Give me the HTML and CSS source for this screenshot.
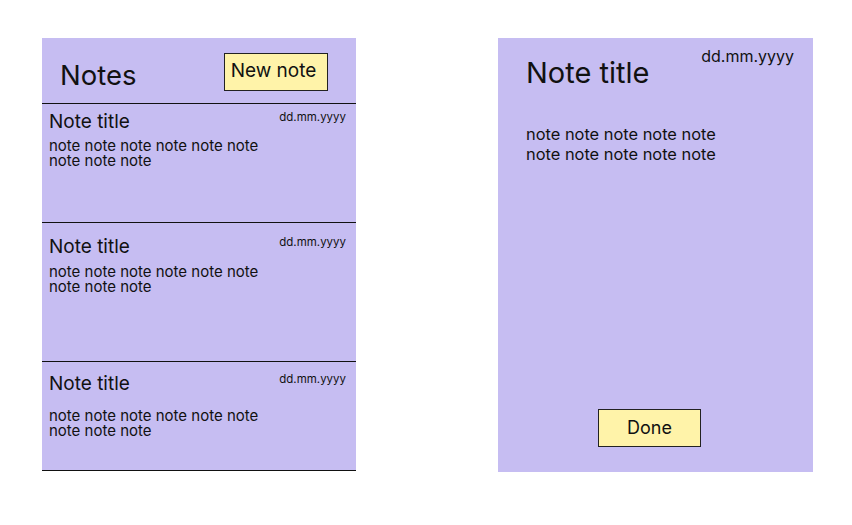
FILE: index.html
```html
<!DOCTYPE html>
<html>
<head>
<meta charset="utf-8">
<link rel="stylesheet" href="styles.css">
</head>
<body>
<div class="screen">
  <section class="list">
    <header class="list-header">
      <h1 class="list-title">Notes</h1>
      <button class="btn btn-new">New note</button>
    </header>
    <article class="note note-1">
      <div class="note-head">
        <h2 class="note-title">Note title</h2>
        <span class="note-date">dd.mm.yyyy</span>
      </div>
      <p class="note-body">note note note note note note note note note</p>
    </article>
    <article class="note note-2">
      <div class="note-head">
        <h2 class="note-title">Note title</h2>
        <span class="note-date">dd.mm.yyyy</span>
      </div>
      <p class="note-body">note note note note note note note note note</p>
    </article>
    <article class="note note-3">
      <div class="note-head">
        <h2 class="note-title">Note title</h2>
        <span class="note-date">dd.mm.yyyy</span>
      </div>
      <p class="note-body">note note note note note note note note note</p>
    </article>
  </section>
  <section class="detail">
    <div class="detail-head">
      <h1 class="detail-title">Note title</h1>
      <span class="detail-date">dd.mm.yyyy</span>
    </div>
    <p class="detail-body">note note note note note note note note note note</p>
    <button class="btn btn-done">Done</button>
  </section>
</div>
</body>
</html>
```

FILE: styles.css
```css
* { box-sizing: border-box; }
html, body { margin: 0; padding: 0; background: #ffffff; }
body { font-family: Inter, "Noto Sans", sans-serif; color: #111; }
h1, h2, p { margin: 0; font-weight: 400; }

.screen {
  display: flex;
  align-items: flex-start;
  gap: 142px;
  padding: 38px 0 0 42px;
}

.list {
  width: 314px;
  background: #c6bdf2;
  display: flex;
  flex-direction: column;
}

.list-header {
  height: 66px;
  border-bottom: 1px solid #111;
  display: flex;
  justify-content: space-between;
  align-items: flex-start;
  padding: 0 28px 0 18px;
}

.list-title {
  font-size: 27.5px;
  line-height: 31px;
  margin-top: 22px;
}

.btn {
  font-family: Inter, "Noto Sans", sans-serif;
  font-size: 18px;
  line-height: 22px;
  color: #111;
  background: #fff3a9;
  border: 1px solid #222;
  border-radius: 0;
  padding: 0;
  height: 38px;
}

.btn-new {
  width: 104px;
  margin-top: 15px;
  font-size: 19px;
  padding: 0 5px 3px 0;
}

.note {
  border-bottom: 1px solid #111;
  padding: 0 10px 0 7px;
}
.note-1 { height: 119px; padding-top: 7px; }
.note-2 { height: 139px; padding-top: 13px; }
.note-3 { height: 109px; padding-top: 11px; }

.note-head {
  display: flex;
  justify-content: space-between;
  align-items: flex-start;
}

.note-title {
  font-size: 19px;
  line-height: 22px;
}

.note-date {
  font-size: 11.5px;
  line-height: 15px;
  margin-top: -1px;
}

.note-body {
  font-size: 15px;
  line-height: 15px;
  max-width: 225px;
  margin-top: 5px;
}
.note-2 .note-body { margin-top: 6px; }
.note-3 .note-body { margin-top: 13px; }

.detail {
  width: 315px;
  height: 434px;
  background: #c6bdf2;
  display: flex;
  flex-direction: column;
}

.detail-head {
  display: flex;
  justify-content: space-between;
  align-items: flex-start;
  padding: 0 19px 0 28px;
}

.detail-title {
  font-size: 29px;
  line-height: 34px;
  margin-top: 18px;
}

.detail-date {
  font-size: 16px;
  line-height: 20px;
  margin-top: 8px;
}

.detail-body {
  font-size: 16.4px;
  line-height: 20px;
  max-width: 210px;
  margin: 34px 0 0 28px;
}

.btn-done {
  width: 103px;
  margin: auto 0 25px 100px;
}
```
